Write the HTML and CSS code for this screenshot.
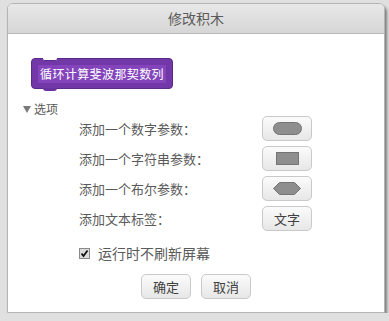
FILE: index.html
```html
<!DOCTYPE html>
<html lang="zh-CN">
<head>
  <meta charset="UTF-8">
  <meta name="viewport" content="width=device-width, initial-scale=1.0">
  <title>修改积木</title>
  <link rel="stylesheet" href="styles.css">
</head>
<body>
  <div class="dialog">
    <div class="title-bar">修改积木</div>

    <div class="content">
      <div class="block">
        <span class="block-name">循环计算斐波那契数列</span>
      </div>

      <div class="options-head"><span class="arrow"></span>选项</div>

      <div class="options">
        <span class="label">添加一个数字参数：</span>
        <button class="shape-btn"><span class="oval"></span></button>

        <span class="label">添加一个字符串参数：</span>
        <button class="shape-btn"><span class="rect"></span></button>

        <span class="label">添加一个布尔参数：</span>
        <button class="shape-btn">
          <svg width="28" height="13" viewBox="0 0 28 13"><polygon points="6.5,0.5 21.5,0.5 27.5,6.5 21.5,12.5 6.5,12.5 0.5,6.5" fill="#8e8e8e" stroke="#747474"/></svg>
        </button>

        <span class="label">添加文本标签：</span>
        <button class="shape-btn text-btn">文字</button>
      </div>

      <label class="check-row">
        <svg class="check" width="11" height="11" viewBox="0 0 11 11">
          <rect x="0.5" y="0.5" width="10" height="10" fill="#dcdcdc" stroke="#8a8a8a"/>
          <path d="M2.5 5.5 L4.5 8 L8.5 2.5" fill="none" stroke="#111" stroke-width="1.8"/>
        </svg>
        运行时不刷新屏幕
      </label>

      <div class="footer">
        <button class="btn">确定</button>
        <button class="btn">取消</button>
      </div>
    </div>
  </div>
</body>
</html>
```

FILE: styles.css
```css
body {
  margin: 0;
  padding: 3px 0 0 7px;
  background: #dfe0df;
  font-family: "Noto Sans CJK SC", "Noto Sans", sans-serif;
  color: #5a5a5a;
}

.dialog {
  width: 376px;
  height: 308px;
  background: #fff;
  border: 1px solid #b4b4b4;
  border-radius: 6px 6px 0 0;
  box-shadow: 2px 3px 3px rgba(0, 0, 0, 0.45);
  display: flex;
  flex-direction: column;
  overflow: hidden;
}

.title-bar {
  height: 29px;
  line-height: 29px;
  text-align: center;
  font-size: 14px;
  color: #5a5a5a;
  background: linear-gradient(#e8e8e8, #d6d6d6);
  border-bottom: 1px solid #b8b8b8;
}

.content {
  display: flex;
  flex-direction: column;
  padding: 24px 0 0 0;
}

.block {
  position: relative;
  align-self: flex-start;
  margin-left: 23px;
  height: 29px;
  padding: 0 6px;
  display: flex;
  align-items: center;
  background: #7238a8;
  border: 1px solid #5a2a88;
  border-radius: 4px;
}

.block::before {
  content: "";
  position: absolute;
  left: 11px;
  top: -1px;
  width: 14px;
  height: 2px;
  background: #fff;
  border-bottom: 1px solid #5a2a88;
  border-radius: 0 0 2px 2px;
}

.block::after {
  content: "";
  position: absolute;
  left: 11px;
  bottom: -3px;
  width: 14px;
  height: 3px;
  background: #6a32a0;
  border-radius: 0 0 3px 3px;
}

.block-name {
  background: #8344bc;
  color: #fff;
  font-size: 12px;
  letter-spacing: 0.4px;
  line-height: 18px;
  padding: 0 2px;
}

.options-head {
  margin: 13px 0 0 15px;
  font-size: 12px;
  line-height: 14px;
  display: flex;
  align-items: center;
  gap: 3px;
}

.arrow {
  width: 0;
  height: 0;
  border-left: 4px solid transparent;
  border-right: 4px solid transparent;
  border-top: 7px solid #7a7a7a;
}

.options {
  display: grid;
  grid-template-columns: 183px 50px;
  grid-auto-rows: 25px;
  row-gap: 5px;
  align-items: center;
  margin: 0 0 0 71px;
}

.label {
  font-size: 13px;
}

.shape-btn,
.btn {
  height: 25px;
  width: 50px;
  padding: 0;
  display: flex;
  align-items: center;
  justify-content: center;
  background: linear-gradient(#fbfbfb, #e7e7e7);
  border: 1px solid #c9c9c9;
  border-radius: 5px;
  font-family: inherit;
  font-size: 13px;
  color: #404040;
}

.oval {
  width: 27px;
  height: 11px;
  background: #8e8e8e;
  border: 1px solid #747474;
  border-radius: 7px;
}

.rect {
  width: 21px;
  height: 11px;
  background: #8e8e8e;
  border: 1px solid #747474;
}

.check-row {
  margin: 12px 0 0 71px;
  display: flex;
  align-items: center;
  gap: 8px;
  font-size: 14px;
  line-height: 20px;
}

.footer {
  margin-top: 11px;
  display: flex;
  justify-content: center;
  gap: 10px;
}
```
